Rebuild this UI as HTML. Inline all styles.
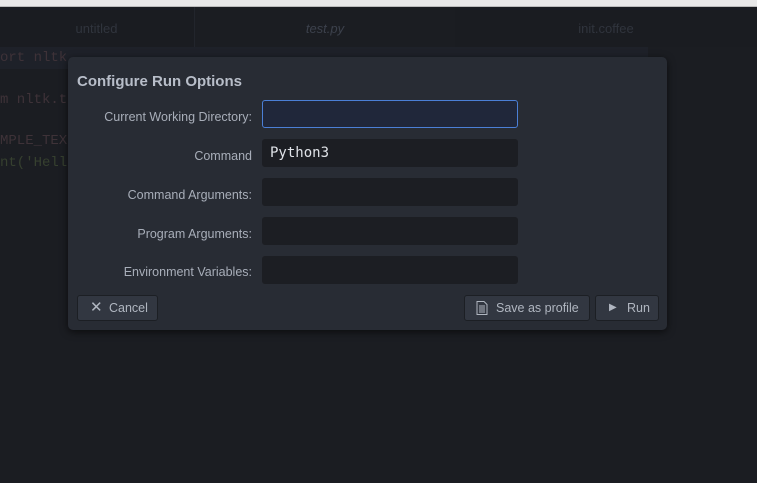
<!DOCTYPE html>
<html><head><style>
body{margin:0;width:757px;height:483px;background:#1b1d22;position:relative;overflow:hidden;font-family:"Liberation Sans",sans-serif;}
.top{position:absolute;left:0;top:0;width:757px;height:6px;background:#e8e8e8;border-bottom:1px solid #bbb;}
.tabs{position:absolute;top:7px;left:0;width:757px;height:40px;background:#1a1c21;}
.tab{position:absolute;top:0;height:40px;line-height:44px;text-align:center;font-size:13px;color:#30343d;}
.code{position:absolute;left:0;font-family:"Liberation Mono",monospace;font-size:14px;color:#3e3238;}
.modal{position:absolute;left:68px;top:57px;width:599px;height:273px;background:#282c34;border-radius:5px;box-shadow:0 2px 8px rgba(0,0,0,.6);}
.title{position:absolute;left:9px;top:16px;font-size:15px;font-weight:bold;color:#b8bec9;}
.lab{position:absolute;right:415px;font-size:12.5px;color:#a8aeb9;}
.inp{position:absolute;left:194px;width:256px;height:28px;background:#1c1e23;border-radius:3px;}
.btn{position:absolute;top:238px;height:24px;background:#323741;border:1px solid #1c1f24;border-radius:3px;color:#b0b6c0;font-size:12.5px;line-height:24px;}
</style></head><body>
<div class="top"></div>
<div class="tabs">
<div class="tab" style="left:0;width:193px">untitled</div>
<div class="tab" style="left:194px;width:260px;background:#1b1d22;font-style:italic;color:#3c414c;border-left:1px solid #22252c">test.py</div>
<div class="tab" style="left:455px;width:302px">init.coffee</div>
</div>
<div style="position:absolute;left:0;top:47px;width:648px;height:22px;background:#1e2129"></div>
<div class="code" style="top:50px">ort nltk</div>
<div class="code" style="top:92px">m nltk.t</div>
<div class="code" style="top:133px">MPLE_TEX</div>
<div class="code" style="top:155px;color:#36402f">nt('Hell</div>
<div class="modal">
<div class="title">Configure Run Options</div>
<div class="lab" style="top:53px">Current Working Directory:</div>
<div class="inp" style="top:43px;left:194px;width:254px;height:26px;border:1px solid #4b7fd6;background:#20273a"></div>
<div class="lab" style="top:92px">Command</div>
<div class="inp" style="top:82px"><span style="position:absolute;left:8px;top:6px;font-family:'DejaVu Sans Mono',monospace;font-size:14px;color:#e0e3e8">Python3</span></div>
<div class="lab" style="top:131px">Command Arguments:</div>
<div class="inp" style="top:121px"></div>
<div class="lab" style="top:170px">Program Arguments:</div>
<div class="inp" style="top:160px"></div>
<div class="lab" style="top:208px">Environment Variables:</div>
<div class="inp" style="top:199px"></div>
<div class="btn" style="left:9px;width:79px"><span style="position:absolute;left:12px;font-size:15px">✕</span><span style="position:absolute;left:31px">Cancel</span></div>
<div class="btn" style="left:396px;width:124px"><svg style="position:absolute;left:11px;top:5px" width="12" height="14" viewBox="0 0 12 14"><path d="M1 .5h7l3 3v10H1z M3 5h6M3 7h6M3 9h6M3 11h6" fill="none" stroke="#b0b6c0"/></svg><span style="position:absolute;left:31px">Save as profile</span></div>
<div class="btn" style="left:527px;width:62px"><span style="position:absolute;left:13px;font-size:10px">▶</span><span style="position:absolute;left:31px">Run</span></div>
</div>
</body></html>
